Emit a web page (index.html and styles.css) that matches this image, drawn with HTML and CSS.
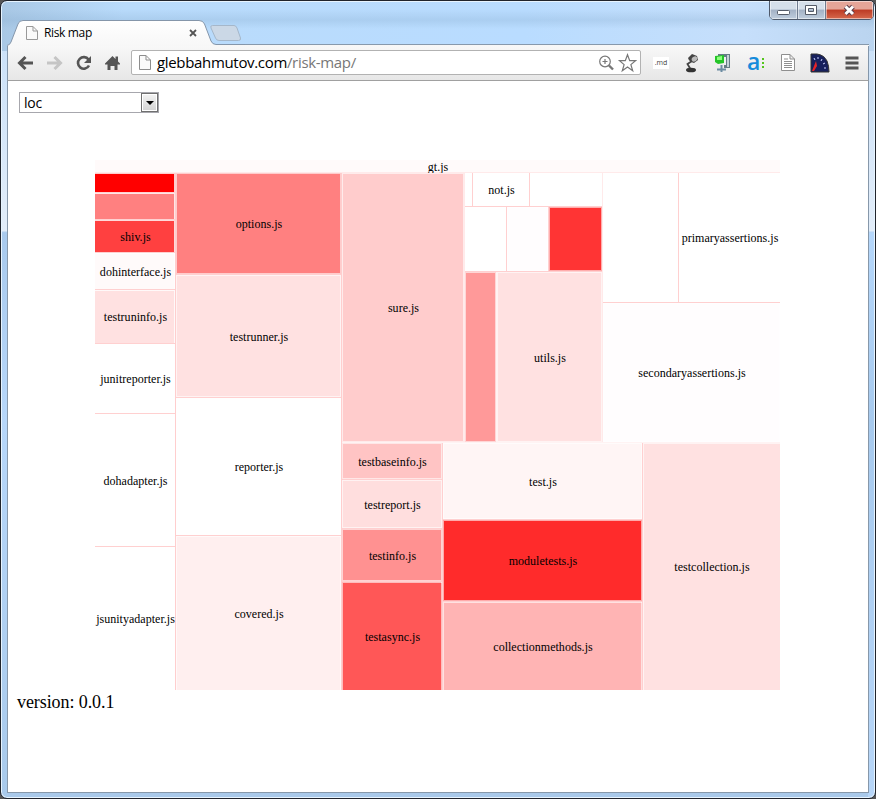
FILE: index.html
```html
<!DOCTYPE html>
<html lang="en">
<head>
<meta charset="utf-8">
<title>Risk map</title>
<link rel="stylesheet" href="styles.css">
</head>
<body>
<div class="window">
  <div class="controls">
    <span class="control"><svg width="26" height="19" viewBox="0 0 26 19"><rect x="7.5" y="9.500" width="12" height="4" rx="1" fill="#fff" stroke="#555b68"/></svg></span>
    <span class="control"><svg width="26" height="19" viewBox="0 0 26 19"><path fill="#fff" fill-rule="evenodd" stroke="#555b68" d="M7.500 4.500h11v9h-11zM10.500 7.500v3h5v-3z"/></svg></span>
    <span class="control close"><svg width="47" height="19" viewBox="0 0 47 19"><path d="m19.500 5.500 7.500 7.500m0-7.500-7.500 7.500" stroke="#5b3d49" stroke-width="5"/><path d="m19.500 5.500 7.500 7.500m0-7.500-7.500 7.500" stroke="#fff" stroke-width="3"/></svg></span>
  </div>
  <header class="tabs">
    <svg class="tab-shape" width="240" height="26" viewBox="0 0 240 26">
      <defs><linearGradient id="tab" x2="0" y2="1"><stop stop-color="#fff"/><stop offset="1" stop-color="#f7f7f7"/></linearGradient></defs>
      <path d="M0 25.500Q3 25 4 22L11 4Q12 .5 16 .5H192Q196 .5 197.500 4L204 21Q205.500 24.500 209 24.500H240V26H0Z" fill="url(#tab)"/>
      <path d="M0 25.500Q3 25 4 22L11 4Q12 .5 16 .5H192Q196 .5 197.500 4L204 21Q205.500 24.500 209 24.500H240" fill="none" stroke="#8596aa"/>
      <path d="M205.500 5.500H227Q229 5.500 230 8L233.500 18Q234 20.500 231.500 20.500H212Q209.500 20.500 208.500 18L204 8Q203 5.500 205.500 5.500Z" fill="#cbd8e6" stroke="#a5b7ca"/>
    </svg>
    <div class="tab">
      <svg width="12" height="14" viewBox="0 0 12 14"><path d="M.5.5H7L11.500 5v8.500H.5zM7 .5V5h4.500" fill="#fafafa" stroke="#999"/></svg>
      <span class="tab-title">Risk map</span>
      <svg width="8" height="8" viewBox="0 0 8 8"><path d="m1 1 6 6m0-6L1 7" stroke="#555" stroke-width="1.800"/></svg>
    </div>
    <div class="strip-line"></div>
  </header>
  <nav class="toolbar">
    <svg width="124" height="34" viewBox="0 0 124 34">
      <g fill="none" stroke="#555" stroke-width="3">
        <path d="M11.500 17H25M17.500 11l-6 6 6 6"/>
        <path d="M39 17h13.500M46.500 11l6 6-6 6" stroke="#c5c5c5"/>
        <path d="M80.500 13.500A5.800 5.800 0 1 0 81 19.500" stroke-width="2.600"/>
      </g>
      <path d="M83 10v7h-7z" fill="#555"/>
      <path d="M97 17.500 104.500 10l3 3v-2.500h2.500V15.500l2 2v1h-2.500V24h-3v-4h-4v4h-3v-5.500H97z" fill="#555"/>
    </svg>
    <div class="address">
      <svg width="12" height="15" viewBox="0 0 12 15"><path d="M.5.5H7L11.500 5v9.500H.5zM7 .5V5h4.500" fill="#fafafa" stroke="#8d8d8d"/></svg>
      <span class="url">glebbahmutov.com<i>/risk-map/</i></span>
      <svg width="40" height="20" viewBox="0 0 40 20"><g fill="none" stroke="#777" stroke-width="1.200"><circle cx="8" cy="8.500" r="5.300"/><path d="M8 6v5M5.500 8.500h5"/><path d="m12 12.500 4 4" stroke-width="2.400"/><path d="m30.500 1.700 2.200 6h5.800l-4.600 3.900 1.800 6.200-5.200-3.700-5.200 3.700 1.800-6.200-4.600-3.900h5.800z"/></g></svg>
    </div>
    <div class="extensions">
      <span class="md">.md</span>
      <svg class="lamp" width="18" height="20" viewBox="0 0 18 20"><path d="M8 17 4.500 11 9 8" fill="none" stroke="#444" stroke-width="1.800"/><path d="m5 5 4-4 5 2 1 4-4 3q-5-1-6-5z" fill="#444"/><ellipse cx="11.500" cy="6" rx="3" ry="2.300" fill="#bbb" transform="rotate(-35 11.500 6)"/><ellipse cx="8" cy="17" rx="5" ry="2.300" fill="#333"/></svg>
      <svg class="archive" width="18" height="20" viewBox="0 0 18 20"><path d="M4 1h12v14h-6v-3h2V4H4z" fill="#667c86"/><path d="M13 2h2v12h-2z" fill="#c4d2d7"/><path d="M1 3l9-1v8l-6 1-3-2z" fill="#25c529"/><path d="M3 4l5-1v4H3z" fill="#8dff7c"/><path d="M7.500 12v7M3 16.500h9" stroke="#6c8ca2" stroke-width="2"/></svg>
      <span class="alexa">a<svg width="3" height="12" viewBox="0 0 3 12"><path d="M0 0h2v2H0zm0 4h2v2H0zm0 4h2v2H0z" fill="#55c51c"/></svg></span>
      <svg class="doc" width="14" height="17" viewBox="0 0 14 17"><path d="M.5.5H9L13.500 5v11.500H.5zM9 .5V5h4.500M3 5h4M3 7.500h8M3 9.500h8M3 11.500h8M3 13.500h8" fill="#fff" stroke="#8f8f8f"/></svg>
      <svg class="gauge" width="20" height="20" viewBox="0 0 20 20"><path d="M1 1h6Q14 2 17 8q2 5 2 11H1z" fill="#17205d" stroke="#333"/><path d="m4 5 1 2m3-3v2m4 0-1 2m4 2-2 1m3 4h-2" stroke="#cad2ff"/><path d="M2 18 6 8l1 5-3 5z" fill="#e52328"/></svg>
      <svg class="menu" width="14" height="14" viewBox="0 0 14 14"><path d="M.5 2h13M.5 7h13M.5 12h13" stroke="#555" stroke-width="3"/></svg>
    </div>
  </nav>
  <main class="page">
    <div class="select"><span>loc</span><span class="arrow"><svg width="8" height="4" viewBox="0 0 8 4"><path d="M0 0h8L4 4z"/></svg></span></div>
    <div class="map">
      <div class="cell faint">gt.js</div>
      <div class="body">
        <div class="grid col-a">
          <div class="cell r100"></div><div class="cell r50"></div><div class="cell r75">shiv.js</div><div class="cell faint">dohinterface.js</div><div class="cell r12">testruninfo.js</div><div class="cell">junitreporter.js</div><div class="cell">dohadapter.js</div><div class="cell">jsunityadapter.js</div>
        </div>
        <div class="grid col-b">
          <div class="cell r50">options.js</div><div class="cell r12">testrunner.js</div><div class="cell">reporter.js</div><div class="cell r6 last">covered.js</div>
        </div>
        <div class="grid col-c">
          <div class="grid upper">
            <div class="cell r20">sure.js</div>
            <div class="grid middle">
              <div class="grid mid-1"><div class="cell"></div><div class="cell">not.js</div><div class="cell"></div></div>
              <div class="grid mid-2"><div class="cell"></div><div class="cell trace"></div><div class="cell r80"></div></div>
              <div class="grid mid-3"><div class="cell r40"></div><div class="cell r12">utils.js</div></div>
            </div>
            <div class="grid assertions">
              <div class="grid primary"><div class="cell"></div><div class="cell">primaryassertions.js</div></div>
              <div class="cell trace">secondaryassertions.js</div>
            </div>
          </div>
          <div class="grid lower">
            <div class="grid low-1"><div class="cell r23">testbaseinfo.js</div><div class="cell r13">testreport.js</div><div class="cell r43">testinfo.js</div><div class="cell r66 last">testasync.js</div></div>
            <div class="grid low-2"><div class="cell r4">test.js</div><div class="cell r83">moduletests.js</div><div class="cell r30 last">collectionmethods.js</div></div>
            <div class="cell r12 corner">testcollection.js</div>
          </div>
        </div>
      </div>
    </div>
    <div class="version">version: 0.0.1</div>
  </main>
</div>
</body>
</html>
```
FILE: styles.css
```css
* { box-sizing: border-box; }
body { margin: 0; background: #555; font-family: "Open Sans", sans-serif; }
svg { display: block; flex: none; }
.window {
  position: relative; display: flex; flex-direction: column;
  width: 876px; height: 799px; padding: 19px 6px 5px;
  border: 1px solid #20242c; border-radius: 7px; overflow: hidden;
  background:
    linear-gradient(#bfddfb00 230px, #a9caed 232px, #b7d7fa 420px, #a9caeb) left / 7px 100% no-repeat,
    linear-gradient(#bfddfb00 230px, #b5d7fb 232px, #a7caee 420px, #b7d6f8) right / 7px 100% no-repeat,
    linear-gradient(#ffffff00 8px, #8aaed04d 19px, #ffffff00 28px) top / 100% 50px no-repeat,
    linear-gradient(90deg, #a9c8e5, #b9dbfb 14%, #b9dcff 60%, #c6dffb 85%, #bad4ef) top / 100% 50px no-repeat,
    linear-gradient(#c5def8, #e2edf9 230px, #a9c9ea 232px);
  box-shadow: inset 0 0 0 1px #e7f4ff;
}
.controls {
  position: absolute; top: -1px; right: 1px; display: flex; height: 20px;
  border: 1px solid #4f596a; border-radius: 0 0 5px 5px; overflow: hidden;
}
.control { width: 28px; border-right: 1px solid #6f7c90; box-shadow: inset 0 0 0 1px #ffffff80; background: linear-gradient(#d5dfea 45%, #a3b1c5 50%, #bfcddd); }
.close { width: 47px; border: 0; background: linear-gradient(#e5a598 45%, #bd3b24 50%, #d6694d); }
.tabs { position: relative; display: flex; height: 26px; }
.tab-shape { margin-right: -240px; }
.tab { position: relative; display: flex; align-items: center; width: 199px; padding: 0 9px 1px 19px; font-size: 12px; }
.tab-title { flex: 1; margin-left: 6px; letter-spacing: -.35px; }
.strip-line { flex: 1; align-self: flex-end; height: 2px; margin-left: 39px; border-top: 1px solid #8799ac; background: #f7f7f7; }
.toolbar {
  display: flex; align-items: center; height: 35px; padding-bottom: 1px; flex: none;
  border: 1px solid #8396aa; border-width: 0 1px; border-bottom: 1px solid #a0a0a0; background: linear-gradient(#f8f8f8, #e7e7e7);
}
.address {
  display: flex; align-items: center; width: 510px; height: 25px; margin-left: -1px; padding: 0 3px 0 7px;
  border: 1px solid #b2b2b2; border-radius: 2px; background: #fff;
}
.url { flex: 1; margin-left: 6px; padding-bottom: 1px; font-size: 15px; line-height: 21px; letter-spacing: -.33px; }
.url i { color: #777; font-style: normal; }
.extensions { display: flex; flex: 1; align-items: center; padding-left: 12px; }
.md { width: 16px; height: 12px; background: #fff; color: #444; font-size: 7px; line-height: 12px; text-align: center; }
.lamp { margin-left: 14px; }
.archive { margin-left: 13px; }
.alexa { display: flex; align-items: center; gap: 2px; width: 19px; margin-left: 15px; color: #168bdb; font-size: 23px; font-weight: 600; line-height: 20px; padding-bottom: 3px; }
.alexa svg { margin-top: 6px; }
.doc { margin-left: 15px; }
.gauge { margin-left: 15px; }
.menu { margin-left: 15px; }
.page { flex: 1; padding: 11px 0 0 9px; border: 1px solid #8798aa; border-top: 0; background: #fff; font-family: "Liberation Serif", serif; }
.select {
  display: flex; justify-content: space-between; width: 140px; height: 21px; margin-left: 2px; padding-left: 4px;
  border: 1px solid #a7a7ad; font: 14px/19px "Open Sans", sans-serif; letter-spacing: -.2px;
}
.arrow { display: grid; place-items: center; width: 17px; border: 1px solid #707070; background: linear-gradient(#f4f4f4, #d2d2d2); box-shadow: inset 0 0 0 1px #fff; }
.map { display: grid; grid-template-rows: 12px 517px; row-gap: 1px; width: 685px; margin: 47px 0 0 78px; background: #ffeaea; font-size: 12px; line-height: 14px; letter-spacing: .02px; }
.map > .cell { box-shadow: none; }
.body { display: grid; grid-template-columns: 80px 165px 438px; column-gap: 1px; background: #ffcece; }
.grid { display: grid; gap: 1px; background: #ffd0d0; }
.cell { display: flex; align-items: center; justify-content: center; min-width: 0; padding: 1px 0 0 1px; background: #fff; white-space: nowrap; box-shadow: inset 0 0 0 1px #ffffff99; }
.col-a { grid-template-rows: 19px 26px 32px 36px 53px 69px 132px 143px; }
.col-a .cell { box-shadow: inset -1px 1px #ffffffcc; }
.col-b { grid-template-rows: 101px 122px 137px 154px; }
.col-c { grid-template-rows: 269px 247px; background: #fff3f3; }
.upper { grid-template-columns: 122px 137px 177px; background: #ffeaea; }
.middle { grid-template-rows: 33px 64px 170px; }
.mid-1 { grid-template-columns: 7px 56px 72px; }
.mid-2 { grid-template-columns: 41px 41px 53px; }
.mid-3 { grid-template-columns: 31px 105px; background: #fff3f3; }
.assertions { grid-template-rows: 129px 139px; }
.primary { grid-template-columns: 75px 101px; }
.lower { grid-template-columns: 100px 199px 137px; }
.low-1 { grid-template-rows: 36px 48px 52px 108px; }
.low-2 { grid-template-rows: 76px 81px 88px; }
.cell.last { box-shadow: inset 1px 1px #ffffff99, inset -1px 0 #ffffff99; }
.cell.corner { box-shadow: inset 1px 1px #ffffff99; }
.trace { background: #fffdfe; }
.faint { background: #fffafa; }
.r4 { background: #fff5f5; }
.r6 { background: #ffefef; }
.r12 { background: #ffe1e1; }
.r13 { background: #ffdede; }
.r20 { background: #ffcccc; }
.r23 { background: #ffc4c4; }
.r30 { background: #ffb4b4; }
.r40 { background: #ff9999; }
.r43 { background: #ff9191; }
.r50 { background: #ff8080; }
.r66 { background: #ff5757; }
.r75 { background: #ff4040; }
.r80 { background: #ff3434; }
.r83 { background: #ff2b2b; }
.r100 { background: #ff0000; }
.version { margin-top: 1px; font-size: 18px; line-height: 22px; letter-spacing: -.08px; }
```
